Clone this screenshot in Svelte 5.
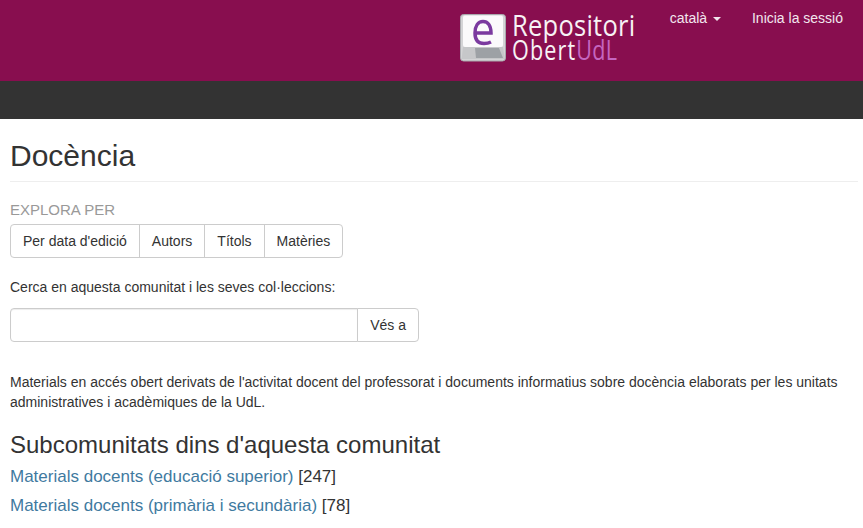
<script>
  const browse = ["Per data d'edició", "Autors", "Títols", "Matèries"];
  const subcommunities = [
    { name: "Materials docents (educació superior)", count: 247 },
    { name: "Materials docents (primària i secundària)", count: 78 },
  ];
</script>

<header class="masthead">
  <a class="brand" href="#home">
    <svg class="key" width="47" height="48" viewBox="0 0 47 48">
      <rect x="0.5" y="0.5" width="45" height="46.500" rx="3" fill="#d4d4d6" stroke="#a9a9ad" />
      <rect x="3" y="1.500" width="40" height="31.500" rx="2" fill="#fbfafb" />
      <path d="M3 33 L43 33 L45 45 L1.500 45 Z" fill="#c6c7c9" />
      <path d="M15 34 L39 34 L43 44 L16 44 Z" fill="#9da1a5" />
      <path d="M15 19 H31 C31 11 27.500 7.500 23 7.500 C18 7.500 15 12 15 19 C15 26 18 29.500 24 29.500 C27 29.500 29 29 31 28" fill="none" stroke="#7b3a9f" stroke-width="3.500" />
    </svg>
    <span class="brand-text">
      <span class="line-one">Repositori</span>
      <span class="line-two">Obert<em>UdL</em></span>
    </span>
  </a>
  <nav class="user-nav">
    <a href="#lang">català <span class="caret"></span></a>
    <a href="#login">Inicia la sessió</a>
  </nav>
</header>
<div class="trail"></div>

<main class="page">
  <h2 class="title">Docència</h2>

  <h4 class="browse-label">EXPLORA PER</h4>
  <div class="btn-group">
    {#each browse as label}
      <a href="#browse">{label}</a>
    {/each}
  </div>

  <p class="search-label">Cerca en aquesta comunitat i les seves col·leccions:</p>
  <form class="search">
    <input type="text" aria-label="Cerca" />
    <button type="button">Vés a</button>
  </form>

  <p class="intro">Materials en accés obert derivats de l'activitat docent del professorat i documents informatius sobre docència elaborats per les unitats administratives i acadèmiques de la UdL.</p>

  <h3 class="sub-title">Subcomunitats dins d'aquesta comunitat</h3>
  <ul class="sub-list">
    {#each subcommunities as sub}
      <li><a href="#sub">{sub.name}</a> <span>[{sub.count}]</span></li>
    {/each}
  </ul>
</main>

<style>
  :global(body) {
    overflow: hidden;
    font-family: "Liberation Sans", Arial, sans-serif;
    font-size: 14px;
    line-height: 20px;
    color: #333;
    background: #fff;
  }

  a {
    text-decoration: none;
  }

  .masthead {
    height: 81px;
    background: #880e4f;
    display: flex;
    justify-content: flex-end;
    align-items: flex-start;
    padding-right: 20px;
  }

  .brand {
    display: flex;
    align-items: flex-start;
    gap: 5px;
    margin: 14px 36px 0 0;
  }

  .key {
    display: block;
  }

  .brand-text {
    display: flex;
    flex-direction: column;
    color: #f7f2f5;
    font-family: "Open Sans", sans-serif;
    font-weight: 400;
    margin-top: -3px;
  }

  .line-one {
    font-size: 30px;
    line-height: 28px;
    letter-spacing: 0.3px;
    transform: scaleX(0.85);
    transform-origin: left center;
    width: 122px;
    white-space: nowrap;
  }

  .line-two {
    font-size: 27px;
    line-height: 22px;
    letter-spacing: 1.4px;
    transform: scaleX(0.8);
    transform-origin: left center;
    white-space: nowrap;
    width: 106px;
  }

  .line-two em {
    font-style: normal;
    color: #c566c0;
    letter-spacing: 0.3px;
  }

  .user-nav {
    display: flex;
    gap: 31px;
    padding-top: 8px;
  }

  .user-nav a {
    color: #f2e6ee;
  }

  .caret {
    display: inline-block;
    width: 0;
    height: 0;
    margin-left: 2px;
    vertical-align: middle;
    border-top: 4px solid;
    border-left: 4px solid transparent;
    border-right: 4px solid transparent;
  }

  .trail {
    height: 38px;
    background: #333;
  }

  .page {
    padding: 0 5px 0 10px;
  }

  .title {
    margin: 0 0 20px;
    padding: 20px 0 9px;
    border-bottom: 1px solid #eee;
    font-size: 30px;
    line-height: 33px;
    font-weight: 500;
  }

  .browse-label {
    margin: 0 0 7px;
    font-size: 15px;
    line-height: 15px;
    font-weight: 400;
    color: #999;
  }

  .btn-group {
    display: inline-flex;
    vertical-align: top;
  }

  .btn-group a {
    padding: 6px 12px;
    border: 1px solid #ccc;
    margin-left: -1px;
    color: #333;
  }

  .btn-group a:first-child {
    margin-left: 0;
    border-radius: 4px 0 0 4px;
  }

  .btn-group a:last-child {
    border-radius: 0 4px 4px 0;
  }

  .search-label {
    margin: 19px 0 11px;
  }

  .search {
    display: flex;
    width: 409px;
    height: 34px;
  }

  .search input {
    flex: 1;
    min-width: 0;
    box-sizing: border-box;
    height: 34px;
    padding: 6px 12px;
    border: 1px solid #ccc;
    border-radius: 4px 0 0 4px;
    box-shadow: inset 0 1px 1px rgba(0, 0, 0, 0.075);
  }

  .search button {
    margin-left: -1px;
    padding: 6px 12px;
    border: 1px solid #ccc;
    border-radius: 0 4px 4px 0;
    background: #fff;
    color: #333;
    font: inherit;
  }

  .intro {
    margin: 30px 0 0;
  }

  .sub-title {
    margin: 20px 0 8px;
    font-size: 24px;
    line-height: 26px;
    font-weight: 500;
  }

  .sub-list {
    list-style: none;
    margin: 0;
    padding: 0;
    font-size: 17px;
    line-height: 22px;
  }

  .sub-list li {
    margin-bottom: 7px;
  }

  .sub-list a {
    color: #3f7a9f;
  }
</style>
